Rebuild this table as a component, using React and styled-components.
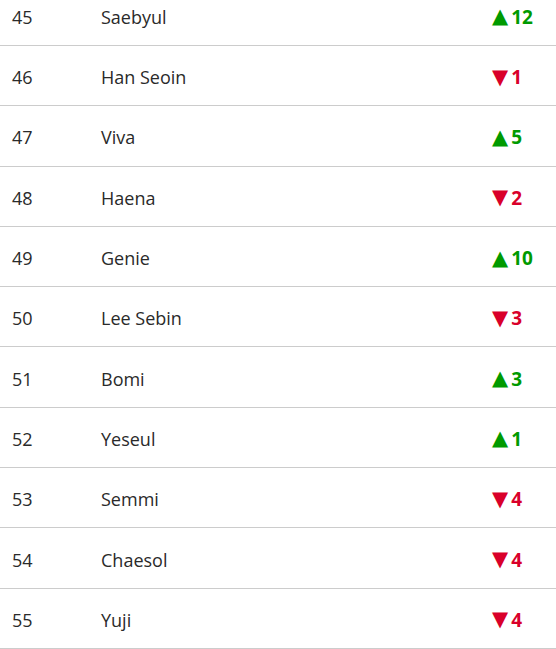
import styled, { createGlobalStyle } from "styled-components";

const rows = [
  { rank: 45, name: "Saebyul", dir: "up", change: 12 },
  { rank: 46, name: "Han Seoin", dir: "down", change: 1 },
  { rank: 47, name: "Viva", dir: "up", change: 5 },
  { rank: 48, name: "Haena", dir: "down", change: 2 },
  { rank: 49, name: "Genie", dir: "up", change: 10 },
  { rank: 50, name: "Lee Sebin", dir: "down", change: 3 },
  { rank: 51, name: "Bomi", dir: "up", change: 3 },
  { rank: 52, name: "Yeseul", dir: "up", change: 1 },
  { rank: 53, name: "Semmi", dir: "down", change: 4 },
  { rank: 54, name: "Chaesol", dir: "down", change: 4 },
  { rank: 55, name: "Yuji", dir: "down", change: 4 },
];

const GlobalStyle = createGlobalStyle`
  html, body {
    margin: 0;
    padding: 0;
    background: #fff;
    overflow: hidden;
  }
  body {
    font-family: "Open Sans", "Noto Sans", sans-serif;
  }
`;

const App = () => {
  return (
    <>
      <GlobalStyle />
      <List>
        {rows.map((r) => (
          <Row key={r.rank}>
            <Rank>{r.rank}</Rank>
            <Name>{r.name}</Name>
            <Change $dir={r.dir}>
              <Arrow>{r.dir === "up" ? "▲" : "▼"}</Arrow>
              {r.change}
            </Change>
          </Row>
        ))}
      </List>
    </>
  );
};

const List = styled.div`
  margin-top: -14.3px;
  width: 556px;
`;

const Row = styled.div`
  display: grid;
  grid-template-columns: 89px 391px 1fr;
  align-items: center;
  box-sizing: border-box;
  height: 60.3px;
  padding: 3px 0 0 12px;
  border-bottom: 1px solid #cccccc;
  font-size: 18px;
  color: #2a2a2a;
`;

const Rank = styled.span``;

const Name = styled.span``;

const Change = styled.span`
  display: flex;
  align-items: center;
  font-size: 19px;
  font-weight: 700;
  color: ${(p) => (p.$dir === "up" ? "#009a00" : "#d9002a")};
`;

const Arrow = styled.span`
  font-family: "DejaVu Sans", sans-serif;
  font-size: 21px;
  line-height: 1;
  margin-right: 3px;
`;

export default App;
